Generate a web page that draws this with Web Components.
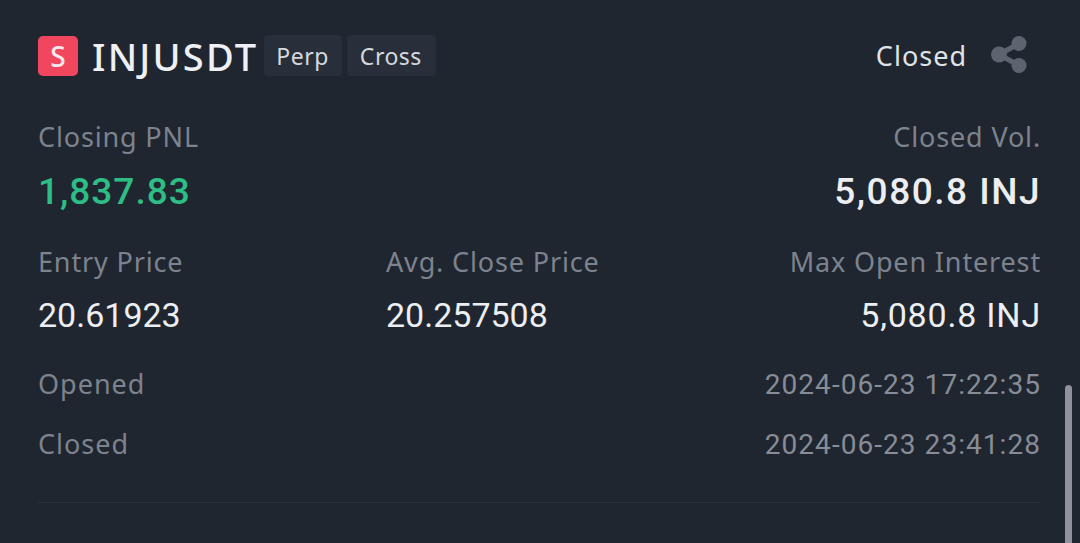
<!DOCTYPE html>
<html>
<head>
<meta charset="utf-8">
<title>INJUSDT</title>
<style>
    html, body { margin: 0; height: 100%; background: #1f2630; overflow: hidden; }
    body { font-family: "Noto Sans", "Liberation Sans", sans-serif; }
</style>
</head>
<body>
<pnl-card></pnl-card>
<script>
// small helper, every element gets an open shadow root from its own template
function makeTemplate(html) {
    const t = document.createElement('template')
    t.innerHTML = html
    return t
}

const tagTemplate = makeTemplate(`
<style>
    :host {
        display: flex;
        align-items: center;
        height: 41px;
        padding: 0 13px 0 12px;
        background: #282f3a;
        border-radius: 4px;
        color: #d5d8dc;
        font-size: 23px;
        letter-spacing: 0.5px;
    }
</style>
<slot></slot>
`)
class PnlTag extends HTMLElement {
    constructor() {
        super()
        this.attachShadow({mode: 'open'}).appendChild(tagTemplate.content.cloneNode(true))
    }
}
customElements.define('pnl-tag', PnlTag)

const headerTemplate = makeTemplate(`
<style>
    :host { display: flex; align-items: center; height: 41px; }
    .side {
        width: 40px; height: 40px;
        display: flex; align-items: center; justify-content: center;
        background: #f0475f; border-radius: 5px;
        color: #f7eaec; font-size: 28px; font-weight: 500;
    }
    .symbol {
        margin: 0 6px 0 14px;
        color: #eef0f3; font-size: 38px; font-weight: 500;
        letter-spacing: 2.2px;
    }
    .tags { display: flex; gap: 5px; }
    .tags pnl-tag + pnl-tag { padding: 0 14px 0 13px; }
    .status { margin-left: auto; color: #e0e3e6; font-size: 27px; letter-spacing: 1px; }
    svg { margin: 0 13px 0 23px; }
</style>
<div class="side">S</div>
<div class="symbol">INJUSDT</div>
<div class="tags"><pnl-tag>Perp</pnl-tag><pnl-tag>Cross</pnl-tag></div>
<div class="status">Closed</div>
<svg width="38" height="40" viewBox="0 0 38 40" fill="#5d6470" stroke="#5d6470">
    <line x1="9" y1="18.5" x2="29" y2="7.5" stroke-width="5"/>
    <line x1="9" y1="18.5" x2="29" y2="29.5" stroke-width="5"/>
    <circle cx="9" cy="18.5" r="8" stroke="none"/>
    <circle cx="29" cy="7.5" r="7.5" stroke="none"/>
    <circle cx="29" cy="29.5" r="7.5" stroke="none"/>
</svg>
`)
class PnlHeader extends HTMLElement {
    constructor() {
        super()
        this.attachShadow({mode: 'open'}).appendChild(headerTemplate.content.cloneNode(true))
    }
}
customElements.define('pnl-header', PnlHeader)

const statTemplate = makeTemplate(`
<style>
    :host { display: flex; flex-direction: column; }
    :host([right]) { text-align: right; }
    .label { color: #7d838e; font-size: 27px; line-height: 34px; letter-spacing: 0.85px; }
    .value {
        margin-top: var(--value-gap, 19px);
        color: #eceef1;
        font-family: Roboto, "Liberation Sans", sans-serif;
        font-size: var(--value-size, 34px);
        font-weight: var(--value-weight, 400);
        line-height: 34px;
        letter-spacing: var(--value-spacing, 0);
    }
    :host([green]) .value { color: #2ebd85; }
</style>
<div class="label"></div>
<div class="value"></div>
`)
class PnlStat extends HTMLElement {
    constructor() {
        super()
        const root = this.attachShadow({mode: 'open'})
        root.appendChild(statTemplate.content.cloneNode(true))
        root.querySelector('.label').textContent = this.getAttribute('label')
        root.querySelector('.value').textContent = this.getAttribute('value')
    }
}
customElements.define('pnl-stat', PnlStat)

const rowTemplate = makeTemplate(`
<style>
    :host {
        display: flex;
        justify-content: space-between;
        color: #7d838e;
        font-size: 27px;
        line-height: 34px;
    }
    .name { letter-spacing: 1px; }
    .date {
        padding-top: 1px;
        color: #878c96;
        font-family: Roboto, "Liberation Sans", sans-serif;
        font-size: 28px;
        letter-spacing: 1.05px;
    }
</style>
<div class="name"></div>
<div class="date"></div>
`)
class PnlRow extends HTMLElement {
    constructor() {
        super()
        const root = this.attachShadow({mode: 'open'})
        root.appendChild(rowTemplate.content.cloneNode(true))
        root.querySelector('.name').textContent = this.getAttribute('name')
        root.querySelector('.date').textContent = this.getAttribute('date')
    }
}
customElements.define('pnl-row', PnlRow)

const cardTemplate = makeTemplate(`
<style>
    :host {
        display: block;
        position: relative;
        height: 543px;
        box-sizing: border-box;
        padding: 35px 39px 0 38px;
        overflow: hidden;
    }
    .top {
        display: flex;
        justify-content: space-between;
        margin-top: 44px;
        --value-size: 37px;
        --value-weight: 500;
        --value-gap: 21px;
        --value-spacing: 1px;
    }
    .top .inj { --value-spacing: 1.5px; }
    .mid {
        display: grid;
        grid-template-columns: 348px 1fr 1fr;
        margin-top: 36px;
    }
    .mid .inj { --value-spacing: 0.8px; }
    pnl-row { margin-top: 25px; }
    pnl-row.first { margin-top: 35px; }
    .line { height: 1px; background: #2b323c; margin-top: 40px; }
    .scroll {
        position: absolute;
        left: 1065px; top: 385px; bottom: -6px; width: 7px;
        background: #8f929c; border-radius: 4px;
    }
</style>
<pnl-header></pnl-header>
<div class="top">
    <pnl-stat green label="Closing PNL" value="1,837.83"></pnl-stat>
    <pnl-stat class="inj" right label="Closed Vol." value="5,080.8 INJ"></pnl-stat>
</div>
<div class="mid">
    <pnl-stat label="Entry Price" value="20.61923"></pnl-stat>
    <pnl-stat label="Avg. Close Price" value="20.257508"></pnl-stat>
    <pnl-stat class="inj" right label="Max Open Interest" value="5,080.8 INJ"></pnl-stat>
</div>
<pnl-row class="first" name="Opened" date="2024-06-23 17:22:35"></pnl-row>
<pnl-row name="Closed" date="2024-06-23 23:41:28"></pnl-row>
<div class="line"></div>
<div class="scroll"></div>
`)
class PnlCard extends HTMLElement {
    constructor() {
        super()
        this.attachShadow({mode: 'open'}).appendChild(cardTemplate.content.cloneNode(true))
    }
}
customElements.define('pnl-card', PnlCard)
</script>
</body>
</html>
